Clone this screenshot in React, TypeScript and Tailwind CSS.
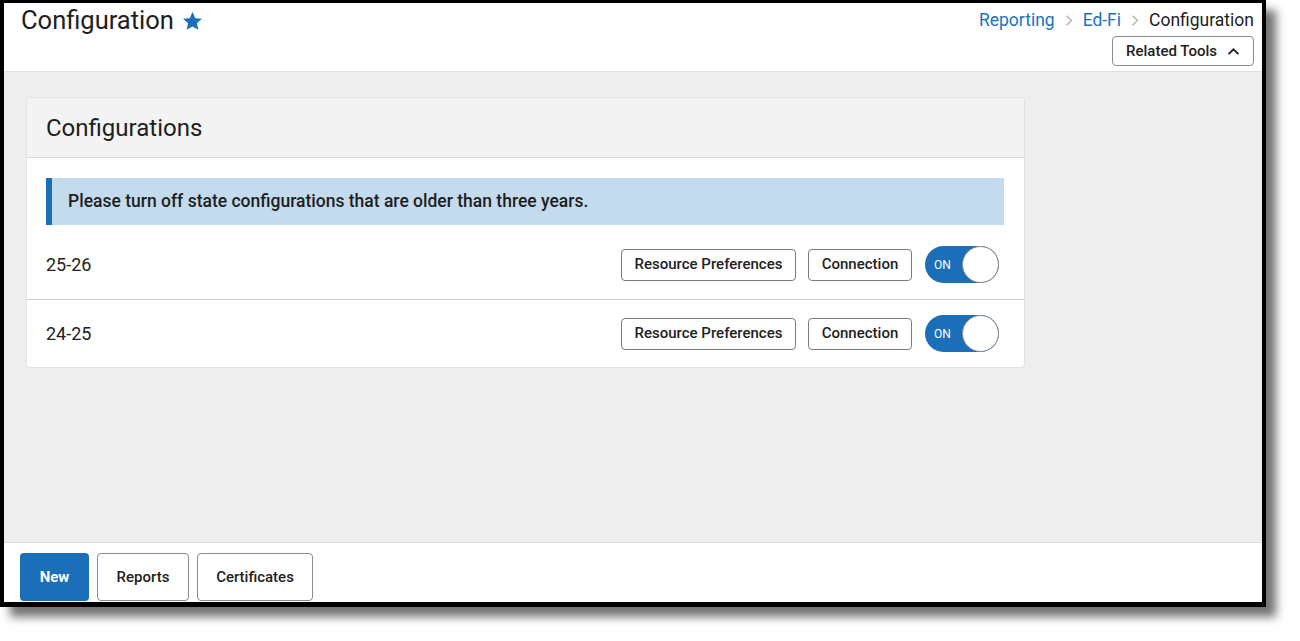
import React from "react";

const Star = () => (
  <svg viewBox="0 0 24 24" className="w-[23px] h-[23px] fill-[#1a6fb8]">
    <path d="M12 2.2l2.9 6.3 6.9.7-5.2 4.6 1.5 6.8L12 17.1l-6.1 3.5 1.5-6.8L2.2 9.2l6.9-.7z" />
  </svg>
);

const Chevron = () => (
  <svg viewBox="0 0 10 16" className="w-[8px] h-[13px] mx-[10px]" fill="none" stroke="#b0b0b0" strokeWidth="1.6">
    <path d="M2 2l6 6-6 6" />
  </svg>
);

const OutlineButton = ({ label, w }: { label: string; w: string }) => (
  <button
    className={`${w} h-[32px] rounded-[4px] border border-[#7a7a7a] bg-white text-[15px] font-medium text-[#222] tracking-[0] [font-family:Roboto,'Liberation_Sans',sans-serif]`}
  >
    {label}
  </button>
);

const Toggle = () => (
  <div className="relative w-[74px] h-[37px] rounded-full bg-[#1a6fb8] flex items-center">
    <span className="pl-[9px] text-[12px] text-white [font-family:Roboto,'Liberation_Sans',sans-serif]">ON</span>
    <div className="absolute right-0 top-0 w-[37px] h-[37px] rounded-full bg-white border border-[#8a8a8a]" />
  </div>
);

const ConfigRow = ({ year, first }: { year: string; first?: boolean }) => (
  <div
    className={`flex items-center justify-between pl-[19px] pr-[25px] ${
      first ? "pt-[15px] pb-[16px] border-b border-[#d0d0d0]" : "pt-[15px] pb-[15px]"
    }`}
  >
    <div className="text-[18px] text-[#222]">{year}</div>
    <div className="flex items-center">
      <OutlineButton label="Resource Preferences" w="w-[175px]" />
      <div className="w-[12px]" />
      <OutlineButton label="Connection" w="w-[104px]" />
      <div className="w-[13px]" />
      <Toggle />
    </div>
  </div>
);

export default function App() {
  return (
    <div className="w-[1300px] h-[641px] bg-white overflow-hidden [font-family:Roboto,'Liberation_Sans',sans-serif]">
      <div className="w-[1266px] h-[607px] border-black border-t-[3px] border-l-[4px] border-r-[4px] border-b-[5px] shadow-[10px_10px_9px_rgba(0,0,0,0.55)] flex flex-col bg-white">
        {/* header */}
        <div className="h-[69px] border-b border-[#dedede] bg-white flex justify-between pl-[17px] pr-[8px] shrink-0">
          <div className="flex items-center gap-[7px] h-[36px]">
            <h1 className="text-[25.5px] text-[#1e1e1e] leading-none">Configuration</h1>
            <Star />
          </div>
          <div className="flex flex-col items-end">
            <div className="flex items-center h-[35px] text-[17.5px]">
              <span className="text-[#1a73c0]">Reporting</span>
              <Chevron />
              <span className="text-[#1a73c0]">Ed-Fi</span>
              <Chevron />
              <span className="text-[#1e1e1e]">Configuration</span>
            </div>
            <button className="w-[142px] h-[30px] -mt-[2px] rounded-[4px] border border-[#8a8a8a] flex items-center justify-center gap-[10px] text-[15px] font-medium text-[#222]">
              Related Tools
              <svg viewBox="0 0 14 10" className="w-[13px] h-[9px]" fill="none" stroke="#222" strokeWidth="2">
                <path d="M1.5 8l5.5-5.5 5.5 5.5" />
              </svg>
            </button>
          </div>
        </div>

        {/* main */}
        <div className="flex-1 bg-[#eeeeee] pl-[22px] pt-[25px]">
          <div className="w-[999px] bg-white rounded-[4px] border border-[#e2e2e2] overflow-hidden">
            <div className="h-[60px] bg-[#f3f3f3] border-b border-[#dcdcdc] flex items-center pl-[19px]">
              <h2 className="text-[24px] text-[#1e1e1e]">Configurations</h2>
            </div>
            <div className="pt-[20px]">
              <div className="ml-[19px] mr-[20px] mb-[6px] h-[47px] bg-[#c4dbee] border-l-[6px] border-[#1a6fb8] flex items-center pl-[16px]">
                <span className="text-[17.5px] font-medium text-[#1e1e1e]">
                  Please turn off state configurations that are older than three years.
                </span>
              </div>
              <ConfigRow year="25-26" first />
              <ConfigRow year="24-25" />
            </div>
          </div>
        </div>

        {/* footer */}
        <div className="h-[60px] border-t border-[#dedede] bg-white flex items-start gap-[8px] pl-[16px] pt-[10px] shrink-0">
          <button className="w-[69px] h-[48px] rounded-[4px] bg-[#1a6fb8] text-white text-[15px] font-bold">New</button>
          <button className="w-[92px] h-[48px] rounded-[4px] border border-[#8a8a8a] text-[15px] font-medium text-[#222]">Reports</button>
          <button className="w-[116px] h-[48px] rounded-[4px] border border-[#8a8a8a] text-[15px] font-medium text-[#222]">Certificates</button>
        </div>
      </div>
    </div>
  );
}
